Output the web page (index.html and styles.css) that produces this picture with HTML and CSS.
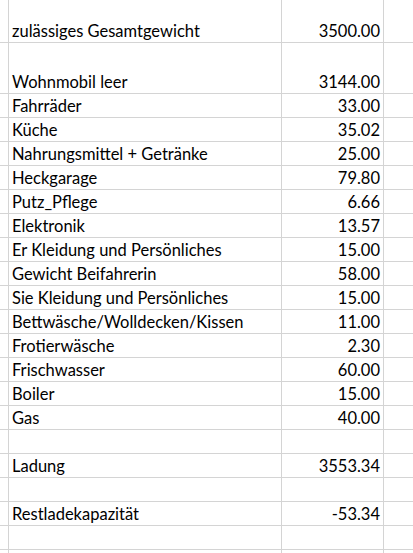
FILE: index.html
```html
<!DOCTYPE html>
<html lang="de">
<head>
<meta charset="utf-8">
<title>Gewicht</title>
<link rel="stylesheet" href="styles.css">
</head>
<body>
<div class="sheet">
  <div class="row r-top"><div class="c0"></div><div class="ca">zulässiges Gesamtgewicht</div><div class="cb">3500.00</div><div class="cc"></div></div>
  <div class="row r-tall"><div class="c0"></div><div class="ca">Wohnmobil leer</div><div class="cb">3144.00</div><div class="cc"></div></div>
  <div class="row"><div class="c0"></div><div class="ca">Fahrräder</div><div class="cb">33.00</div><div class="cc"></div></div>
  <div class="row"><div class="c0"></div><div class="ca">Küche</div><div class="cb">35.02</div><div class="cc"></div></div>
  <div class="row"><div class="c0"></div><div class="ca">Nahrungsmittel + Getränke</div><div class="cb">25.00</div><div class="cc"></div></div>
  <div class="row"><div class="c0"></div><div class="ca">Heckgarage</div><div class="cb">79.80</div><div class="cc"></div></div>
  <div class="row"><div class="c0"></div><div class="ca">Putz_Pflege</div><div class="cb">6.66</div><div class="cc"></div></div>
  <div class="row"><div class="c0"></div><div class="ca">Elektronik</div><div class="cb">13.57</div><div class="cc"></div></div>
  <div class="row"><div class="c0"></div><div class="ca">Er Kleidung und Persönliches</div><div class="cb">15.00</div><div class="cc"></div></div>
  <div class="row"><div class="c0"></div><div class="ca">Gewicht Beifahrerin</div><div class="cb">58.00</div><div class="cc"></div></div>
  <div class="row"><div class="c0"></div><div class="ca">Sie Kleidung und Persönliches</div><div class="cb">15.00</div><div class="cc"></div></div>
  <div class="row"><div class="c0"></div><div class="ca">Bettwäsche/Wolldecken/Kissen</div><div class="cb">11.00</div><div class="cc"></div></div>
  <div class="row"><div class="c0"></div><div class="ca">Frotierwäsche</div><div class="cb">2.30</div><div class="cc"></div></div>
  <div class="row"><div class="c0"></div><div class="ca">Frischwasser</div><div class="cb">60.00</div><div class="cc"></div></div>
  <div class="row"><div class="c0"></div><div class="ca">Boiler</div><div class="cb">15.00</div><div class="cc"></div></div>
  <div class="row"><div class="c0"></div><div class="ca">Gas</div><div class="cb">40.00</div><div class="cc"></div></div>
  <div class="row"><div class="c0"></div><div class="ca"></div><div class="cb"></div><div class="cc"></div></div>
  <div class="row"><div class="c0"></div><div class="ca">Ladung</div><div class="cb">3553.34</div><div class="cc"></div></div>
  <div class="row"><div class="c0"></div><div class="ca"></div><div class="cb"></div><div class="cc"></div></div>
  <div class="row"><div class="c0"></div><div class="ca">Restladekapazität</div><div class="cb">-53.34</div><div class="cc"></div></div>
  <div class="row"><div class="c0"></div><div class="ca"></div><div class="cb"></div><div class="cc"></div></div>
  <div class="row"><div class="c0"></div><div class="ca"></div><div class="cb"></div><div class="cc"></div></div>
</div>
</body>
</html>
```

FILE: styles.css
```css
html, body {
  margin: 0;
  padding: 0;
  background: #ffffff;
}
.sheet {
  width: 413px;
  height: 553px;
  overflow: hidden;
  font-family: Lato, "Open Sans", sans-serif;
  font-size: 16.5px;
  color: #000000;
}
.row {
  display: grid;
  grid-template-columns: 9px 273px 102px 1fr;
  height: 24px;
}
.row.r-top { height: 43px; }
.row.r-tall { height: 51px; }
.row > div {
  box-sizing: border-box;
  border-right: 1px solid #d4d4d4;
  border-bottom: 1px solid #d4d4d4;
  display: flex;
  align-items: flex-end;
  padding-bottom: 1px;
  line-height: 19px;
  white-space: nowrap;
  overflow: hidden;
}
.row > .cc { border-right: none; }
.ca { padding-left: 3px; }
.cb { justify-content: flex-end; padding-right: 3px; }
```
